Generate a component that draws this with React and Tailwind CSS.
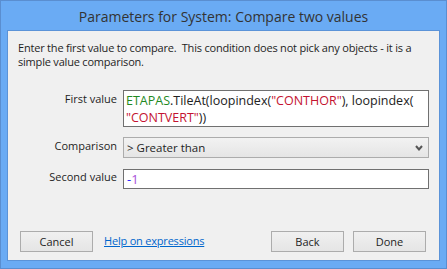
const font = { fontFamily: '"Open Sans", "Noto Sans", sans-serif' }

function Button({ children }) {
  return (
    <button className="w-[73px] h-[21px] border border-[#acacac] bg-gradient-to-b from-[#f0f0f0] to-[#e5e5e5] text-[11px] leading-[19px] text-[#1e1e1e]">
      {children}
    </button>
  )
}

function Label({ children, pt }) {
  return <div className={`w-[109px] shrink-0 text-right text-[11px] leading-[14px] text-[#1e1e1e] ${pt}`}>{children}</div>
}

export default function App() {
  return (
    <div style={font} className="w-[447px] h-[269px] bg-[#6aabf4] border border-[#5a8ed0] flex flex-col">
      <div className="h-[29px] flex items-center justify-center text-[14px] text-[#333] pt-[1px]">
        Parameters for System: Compare two values
      </div>
      <div className="mx-[6px] h-[231px] border border-[#5b93d8] bg-[#f0f0f0] flex flex-col">
        <p className="pl-[10px] pt-[10px] text-[11px] leading-[14px] tracking-[-0.2px] text-[#1e1e1e] whitespace-nowrap">
          Enter the first value to compare.&nbsp; This condition does not pick any objects - it is a
          <br />
          simple value comparison.
        </p>

        <div className="mt-[21px] flex gap-[6px]">
          <Label pt="pt-[2px]">First value</Label>
          <div className="w-[306px] h-[37px] border border-[#707070] bg-white pl-[2px] pt-[1px] text-[12.5px] leading-[17px] text-[#222]">
            <span className="text-[#1f8a1f]">ETAPAS</span>.TileAt(loopindex(<span className="text-[#c41230]">"CONTHOR"</span>), loopindex(
            <br />
            <span className="text-[#c41230]">"CONTVERT"</span>))
          </div>
        </div>

        <div className="mt-[10px] flex gap-[6px]">
          <Label pt="pt-[2px]">Comparison</Label>
          <div className="w-[306px] h-[21px] border border-[#acacac] bg-gradient-to-b from-[#f2f2f2] to-[#e5e5e5] flex items-center justify-between pl-[3px] pr-[5px] text-[11.5px] text-[#1e1e1e]">
            <span>&gt; Greater than</span>
            <svg width="8" height="6" viewBox="0 0 8 6">
              <polyline points="1,1 4,4.5 7,1" fill="none" stroke="#555" strokeWidth="2" />
            </svg>
          </div>
        </div>

        <div className="mt-[11px] flex gap-[6px]">
          <Label pt="pt-[1px]">Second value</Label>
          <div className="w-[306px] h-[20px] border border-[#707070] bg-white pl-[3px] text-[13px] leading-[18px]">
            <span className="text-[#2a2aff]">-</span>
            <span className="text-[#a850d8]">1</span>
          </div>
        </div>

        <div className="mt-auto mb-[8px] flex items-center pl-[12px] pr-[13px]">
          <Button>Cancel</Button>
          <a className="ml-[11px] text-[11px] tracking-[-0.2px] text-[#0066cc] underline">Help on expressions</a>
          <div className="ml-auto flex gap-[9px]">
            <Button>Back</Button>
            <Button>Done</Button>
          </div>
        </div>
      </div>
    </div>
  )
}
